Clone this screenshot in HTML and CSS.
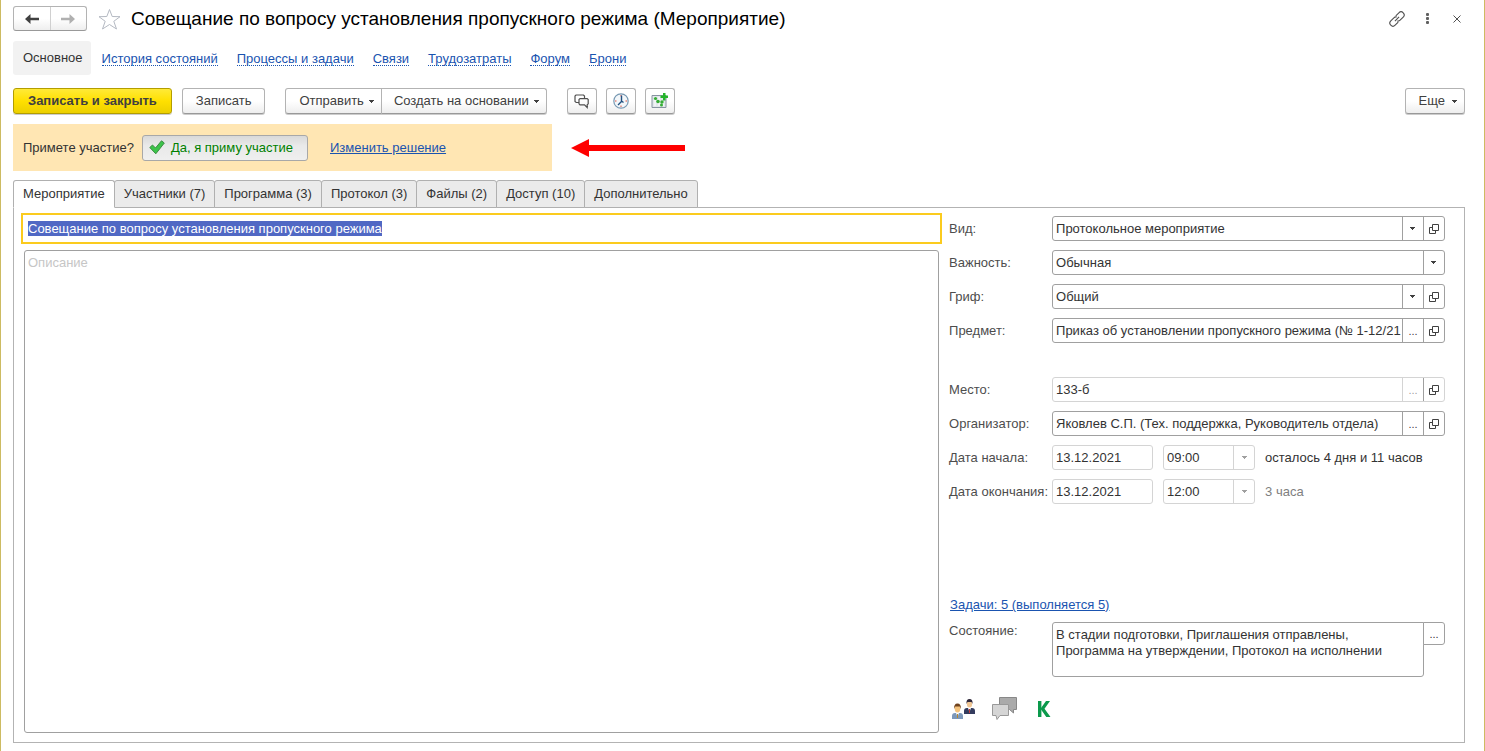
FILE: index.html
```html
<!DOCTYPE html>
<html lang="ru">
<head>
<meta charset="utf-8">
<meta name="viewport" content="width=device-width, initial-scale=1">
<title>Совещание по вопросу установления пропускного режима (Мероприятие)</title>
<link rel="stylesheet" href="styles.css">
<script src="app.js" defer></script>
</head>
<body>
<svg class="sprite" aria-hidden="true">
  <symbol id="i-open" viewBox="0 0 10 10"><path d="M3.5.5h6v6h-6zM3 3.500H.5v6h6V7" fill="none" stroke="#404040"/></symbol>
  <symbol id="i-caret" viewBox="0 0 5 3"><path d="M0 0h5v1H4v1H3v1H2V2H1V1H0z" fill="currentColor"/></symbol>
</svg>
<header class="titlebar">
  <div class="history">
    <button type="button" class="history-btn" aria-label="Назад"><svg width="14" height="10" viewBox="0 0 14 10"><path d="M0 5 5.500 0v3.800H14v2.400H5.500V10z" fill="#404040"/></svg></button>
    <button type="button" class="history-btn" aria-label="Вперед"><svg width="14" height="10" viewBox="0 0 14 10"><path d="M14 5 8.500 0v3.800H0v2.400h8.500V10z" fill="#b0b0b0"/></svg></button>
  </div>
  <button type="button" class="plain star" aria-label="В избранное"><svg width="23" height="22" viewBox="0 0 23 22"><path d="M11.500 1.500 14.200 8.500 22 8.700 15.800 13.300 18.500 21 11.500 16.500 4.500 21 7.200 13.300 1 8.700 8.800 8.500z" fill="none" stroke="#b4b9c2"/></svg></button>
  <h1 class="title">Совещание по вопросу установления пропускного режима (Мероприятие)</h1>
  <div class="window-tools">
    <button type="button" class="plain" aria-label="Получить ссылку"><svg width="16" height="16" viewBox="0 0 17 17" fill="none" stroke="#505050" stroke-width="1.200"><path d="M7.200 5.200 10.500 1.900a3.200 3.200 0 0 1 4.600 4.600l-3.300 3.300a3.200 3.200 0 0 1-3 .8M9.800 11.800l-3.300 3.300a3.200 3.200 0 0 1-4.600-4.600l3.300-3.300a3.200 3.200 0 0 1 3-.8M6.300 10.700l4.400-4.400"/></svg></button>
    <button type="button" class="plain" aria-label="Дополнительно"><svg width="3" height="11" viewBox="0 0 3 11" fill="#606060"><rect width="3" height="3" rx="1"/><rect y="4" width="3" height="3" rx="1"/><rect y="8" width="3" height="3" rx="1"/></svg></button>
    <button type="button" class="plain" aria-label="Закрыть"><svg width="8" height="8" viewBox="0 0 8 8"><path d="M.5.5l7 7M7.500.5l-7 7" stroke="#505050"/></svg></button>
  </div>
</header>
<nav class="sections">
  <a class="section current" href="#main">Основное</a>
  <a class="section" href="#history"><span>История состояний</span></a>
  <a class="section" href="#tasks"><span>Процессы и задачи</span></a>
  <a class="section" href="#links"><span>Связи</span></a>
  <a class="section" href="#time"><span>Трудозатраты</span></a>
  <a class="section" href="#forum"><span>Форум</span></a>
  <a class="section" href="#booking"><span>Брони</span></a>
</nav>
<div class="toolbar">
  <button type="button" class="btn primary">Записать и закрыть</button>
  <button type="button" class="btn">Записать</button>
  <div class="btn-group">
    <button type="button" class="btn menu">Отправить<svg class="caret"><use href="#i-caret"/></svg></button>
    <button type="button" class="btn menu">Создать на основании<svg class="caret"><use href="#i-caret"/></svg></button>
  </div>
  <div class="icon-buttons">
    <button type="button" class="btn icon" aria-label="Обсуждение"><svg width="15" height="15" viewBox="0 0 15 15" fill="none" stroke="#505050" stroke-width="1.200"><path d="M5 8.500H2.200L1 7.500V2l1-1h7.500l1 1v2"/><path d="M6 4.600h7.200l1 1v4.200l-1 1V13.500l-2.700-2.700H6l-1-1V5.600z"/></svg></button>
    <button type="button" class="btn icon" aria-label="Учет времени"><svg width="16" height="16" viewBox="0 0 16 16" fill="none"><circle cx="8" cy="8" r="7.200" fill="#f3f7fa" stroke="#7899b3" stroke-width="1.200"/><path d="M8 2v1.500M8 12.500V14M2 8h1.500M12.500 8H14" stroke="#e05040"/><path d="M8.500 2.500v6L5 12M8.500 8l2 1.500" stroke="#205080" stroke-width="1.400"/></svg></button>
    <button type="button" class="btn icon" aria-label="Добавить на карту"><svg width="17" height="16" viewBox="0 0 17 16"><path d="M1 2.500h14v12H1z" fill="#e3e8ec" stroke="#8794a0"/><path d="M4 4v9M8 4v9M12 8v5" stroke="#fff"/><circle cx="4.500" cy="5.500" r="1.600" fill="#35ae35"/><circle cx="7" cy="8.500" r="1.800" fill="#35ae35"/><circle cx="11" cy="9" r="1.700" fill="#35ae35"/><circle cx="10.500" cy="12" r="1.500" fill="#35ae35"/><path d="M12 0h2.500v2.500H17V5h-2.500v2.500H12V5H9.500V2.500H12z" fill="#25b52b"/></svg></button>
  </div>
  <button type="button" class="btn menu more">Еще<svg class="caret"><use href="#i-caret"/></svg></button>
</div>
<div class="invite-row">
  <section class="invite">
    <span>Примете участие?</span>
    <button type="button" class="btn accepted" aria-pressed="true"><svg width="16" height="15" viewBox="0 0 16 15"><path d="M.8 7.500 3.500 5 6.500 8 12.500.8 15.300 3 6.800 13.800z" fill="#3cc44a" stroke="#3d8b43"/></svg>Да, я приму участие</button>
    <a href="#decision">Изменить решение</a>
  </section>
  <svg class="pointer" width="115" height="18" viewBox="0 0 115 18" aria-hidden="true"><path d="M0 9 18 0v6h96v6H18v6z" fill="#f00"/></svg>
</div>
<div class="tabs" role="tablist">
  <button type="button" class="tab active" role="tab" aria-selected="true">Мероприятие</button>
  <button type="button" class="tab" role="tab">Участники (7)</button>
  <button type="button" class="tab" role="tab">Программа (3)</button>
  <button type="button" class="tab" role="tab">Протокол (3)</button>
  <button type="button" class="tab" role="tab">Файлы (2)</button>
  <button type="button" class="tab" role="tab">Доступ (10)</button>
  <button type="button" class="tab" role="tab">Дополнительно</button>
</div>
<main class="panel">
  <div class="about">
    <input class="subject" id="subject" type="text" aria-label="Наименование" value="Совещание по вопросу установления пропускного режима">
    <textarea class="description" aria-label="Описание" placeholder="Описание"></textarea>
  </div>
  <form class="details">
    <div class="fields">
      <label for="kind">Вид:</label>
      <div class="field pick">
        <select id="kind"><option>Протокольное мероприятие</option></select>
        <span class="cell arrow"><svg class="caret"><use href="#i-caret"/></svg></span>
        <button type="button" class="cell" aria-label="Открыть вид"><svg class="open"><use href="#i-open"/></svg></button>
      </div>
      <label for="importance">Важность:</label>
      <div class="field pick">
        <select id="importance"><option>Обычная</option></select>
        <span class="cell arrow"><svg class="caret"><use href="#i-caret"/></svg></span>
      </div>
      <label for="secrecy">Гриф:</label>
      <div class="field pick">
        <select id="secrecy"><option>Общий</option></select>
        <span class="cell arrow"><svg class="caret"><use href="#i-caret"/></svg></span>
        <button type="button" class="cell" aria-label="Открыть гриф"><svg class="open"><use href="#i-open"/></svg></button>
      </div>
      <label for="topic">Предмет:</label>
      <div class="field">
        <input id="topic" type="text" value="Приказ об установлении пропускного режима (№ 1-12/21 от 09.12.2021)">
        <button type="button" class="cell" aria-label="Выбрать предмет">...</button>
        <button type="button" class="cell" aria-label="Открыть предмет"><svg class="open"><use href="#i-open"/></svg></button>
      </div>
    </div>
    <div class="fields schedule">
      <label for="place">Место:</label>
      <div class="field muted">
        <input id="place" type="text" readonly value="133-б">
        <button type="button" class="cell" aria-label="Выбрать место">...</button>
        <button type="button" class="cell live" aria-label="Открыть место"><svg class="open"><use href="#i-open"/></svg></button>
      </div>
      <label for="organizer">Организатор:</label>
      <div class="field">
        <input id="organizer" type="text" value="Яковлев С.П. (Тех. поддержка, Руководитель отдела)">
        <button type="button" class="cell" aria-label="Выбрать организатора">...</button>
        <button type="button" class="cell" aria-label="Открыть организатора"><svg class="open"><use href="#i-open"/></svg></button>
      </div>
      <label for="start">Дата начала:</label>
      <div class="moment">
        <div class="field muted date"><input id="start" type="text" readonly value="13.12.2021"></div>
        <div class="field muted pick time">
          <select aria-label="Время начала"><option>09:00</option></select>
          <span class="cell arrow"><svg class="caret"><use href="#i-caret"/></svg></span>
        </div>
        <span>осталось 4 дня и 11 часов</span>
      </div>
      <label for="end">Дата окончания:</label>
      <div class="moment">
        <div class="field muted date"><input id="end" type="text" readonly value="13.12.2021"></div>
        <div class="field muted pick time">
          <select aria-label="Время окончания"><option>12:00</option></select>
          <span class="cell arrow"><svg class="caret"><use href="#i-caret"/></svg></span>
        </div>
        <span class="duration">3 часа</span>
      </div>
    </div>
    <a class="task-link" href="#tasks">Задачи: 5 (выполняется 5)</a>
    <div class="fields status-row">
      <label for="status">Состояние:</label>
      <div class="status">
        <textarea id="status" readonly>В стадии подготовки, Приглашения отправлены, Программа на утверждении, Протокол на исполнении</textarea>
        <button type="button" class="status-more" aria-label="Выбрать состояние">...</button>
      </div>
    </div>
    <div class="badges">
      <svg width="24" height="20" viewBox="0 0 24 20" role="img" aria-label="Участники">
        <path d="M12 15v-3q0-3 3-3h5q3 0 3 3v3z" fill="#343c5e"/><path d="M16 9h3l-1.500 4z" fill="#fff"/><path d="M17 10h1v4h-1z" fill="#c03a3a"/><ellipse cx="17.500" cy="5" rx="2.600" ry="3.500" fill="#f1c795"/><path d="M14.500 5q-.5-5 3-5t3 5l-1-2h-4z" fill="#30283a"/>
        <path d="M0 20v-3q0-3 3-3h5q3 0 3 3v3z" fill="#7d98ba"/><path d="M4 14h3l-1.500 4z" fill="#fff"/><path d="M5 15h1v4H5z" fill="#b58830"/><ellipse cx="5.500" cy="9.500" rx="2.800" ry="4" fill="#f4c27c"/><path d="M2.200 10q-.5-5.500 3.300-5.500T8.800 10l-1-2.500H3.200z" fill="#70421d"/>
      </svg>
      <svg width="25" height="24" viewBox="0 0 25 24" role="img" aria-label="Обсуждения"><path d="M7.500.5h17v12h-3V16l-4-3.500h-10z" fill="#aaa" stroke="#888"/><path d="M.5 7.500h16v11H8L5 22.500l-1-4H.5z" fill="#d5d5d5" stroke="#999"/></svg>
      <svg width="18" height="16" viewBox="-4 0 18 16" role="img" aria-label="Контроль"><path d="M2.700 0v16" stroke="#0b9a4c" stroke-width="3.400"/><path d="M9 0h4L7.500 7.700 13.500 16H9.300L4 8.500V7z" fill="#0b9a4c"/></svg>
    </div>
  </form>
</main>
</body>
</html>
```
FILE: styles.css
```css
* { box-sizing: border-box; }

body {
  margin: 0;
  min-height: 100vh;
  display: flex;
  flex-direction: column;
  padding: 6px 19px 8px 12px;
  border: solid #cdbb62;
  border-width: 0 1px;
  background: #fff;
  color: #333;
  font: 13px/16px "Liberation Sans", Arial, sans-serif;
}

button, input, select, textarea { font: inherit; color: inherit; margin: 0; }
button { cursor: pointer; }
a { color: #1a54b0; }
svg { display: block; flex: none; }
.sprite { position: absolute; width: 0; height: 0; }
.caret { width: 5px; height: 3px; }
.open { width: 10px; height: 10px; }
.plain { display: flex; justify-content: center; padding: 0; border: 0; background: none; }

.titlebar { display: flex; align-items: center; height: 25px; }
.history {
  display: flex;
  width: 74px;
  height: 25px;
  border: 1px solid #b3b3b3;
  border-bottom-color: #999;
  border-radius: 3px;
  background: linear-gradient(#fff 50%, #eee);
}
.history-btn {
  flex: 1;
  display: flex;
  align-items: center;
  justify-content: center;
  padding: 0;
  border: 0;
  background: none;
}
.history-btn + .history-btn { border-left: 1px solid #d0d0d0; }
.star { margin: 0 10px 0 11px; }
.title {
  flex: 1;
  margin: 0;
  color: #000;
  font-size: 19px;
  font-weight: 400;
  line-height: 24px;
  white-space: nowrap;
}
.window-tools { display: flex; align-items: center; gap: 14px; }
.window-tools .plain { width: 16px; }

.sections { display: flex; margin-top: 10px; }
.section { padding: 11px 9px 9px 10px; text-decoration: none; }
.section span { display: block; line-height: 13px; border-bottom: 1px dotted #1a54b0; }
.section.current {
  margin-right: 1px;
  padding: 9px 8px 9px 10px;
  border-radius: 3px;
  background: #f2f2f2;
  color: #333;
}

.toolbar { display: flex; margin-top: 13px; padding-bottom: 1px; }
.btn {
  display: flex;
  align-items: center;
  justify-content: center;
  height: 26px;
  padding: 0 13px;
  border: 1px solid #b3b3b3;
  border-bottom-color: #999;
  border-radius: 3px;
  background: linear-gradient(#fff 50%, #eee);
  box-shadow: 0 1px 0 #ccc;
  color: #404040;
  white-space: nowrap;
}
.btn.primary {
  margin-right: 10px;
  padding: 0 14px;
  border-color: #b39d00;
  background: linear-gradient(#ffea38, #ffe000 50%, #ecd000);
  font-weight: 700;
}
.btn.menu { gap: 5px; padding-right: 7px; }
.btn-group { display: flex; margin-left: 20px; }
.btn-group .btn:first-child { border-radius: 3px 0 0 3px; }
.btn-group .btn:last-child { margin-left: -1px; padding-left: 12px; border-radius: 0 3px 3px 0; }
.icon-buttons { display: flex; gap: 9px; margin-left: 20px; }
.btn.icon { width: 30px; padding: 0; }
.btn.more { margin-left: auto; gap: 7px; }

.invite-row { display: flex; align-items: center; gap: 19px; margin-top: 9px; }
.invite {
  display: flex;
  align-items: center;
  width: 539px;
  height: 47px;
  padding: 0 10px;
  background: #ffe6b3;
}
.btn.accepted {
  gap: 6px;
  margin: 0 22px 0 8px;
  padding: 0 14px 0 6px;
  border: 1px solid #a8a8a8;
  background: linear-gradient(#d9d9d9, #e9e9e9 40%, #efefef);
  box-shadow: none;
  color: #008000;
}

.tabs { position: relative; display: flex; margin-top: 9px; }
.tab {
  z-index: 0;
  height: 28px;
  margin-right: -1px;
  padding: 0 9px;
  border: 1px solid #b0b0b0;
  border-radius: 3px 3px 0 0;
  background: #ebebeb;
  white-space: nowrap;
}
.tab.active { z-index: 1; border-bottom-color: #fff; background: #fff; }

.panel {
  flex: 1;
  display: grid;
  grid-template-columns: minmax(0, 13fr) minmax(0, 7fr);
  gap: 7px;
  margin-top: -1px;
  padding: 5px 19px 9px 7px;
  border: 1px solid #b3b3b3;
}

.about { display: flex; flex-direction: column; gap: 6px; }
.subject {
  width: 100%;
  height: 31px;
  padding: 0 5px;
  border: 2px solid #fbcb1e;
  outline: 0;
}
.subject::selection { background: #5068c4; color: #fff; }
.description {
  flex: 1;
  display: block;
  margin: 0 3px;
  padding: 4px 3px;
  border: 1px solid #a0a0a0;
  border-radius: 3px;
  resize: none;
}
.description::placeholder { color: #c6c6c6; }

.details { padding-top: 3px; }
.fields {
  display: grid;
  grid-template-columns: 103px minmax(0, 1fr);
  align-items: center;
  row-gap: 9px;
}
.fields label { color: #4d4d4d; white-space: nowrap; }
.schedule { margin-top: 34px; }
.field {
  display: grid;
  grid-template-columns: minmax(0, 1fr);
  grid-auto-columns: 21px;
  grid-auto-flow: column;
  height: 25px;
  border: 1px solid #a0a0a0;
  border-radius: 3px;
}
.field input, .field select {
  grid-row: 1;
  width: 100%;
  min-width: 0;
  padding: 0 3px;
  border: 0;
  background: none;
  outline: 0;
  appearance: none;
}
.field input { padding-right: 1px; }
.pick select { grid-column: 1 / 3; }
.cell {
  grid-row: 1;
  display: flex;
  align-items: center;
  justify-content: center;
  padding: 0;
  border: 0;
  border-left: 1px solid #a0a0a0;
  background: none;
  color: #404040;
  font-size: 11px;
}
.arrow { grid-column: 2; pointer-events: none; }
.muted, .muted .cell { border-color: #d4d4d4; }
.muted .cell { color: #a0a0a0; }
.muted .cell.live { border-left-color: #a0a0a0; }
.moment { display: flex; align-items: center; gap: 10px; white-space: nowrap; }
.date { width: 101px; }
.time { width: 92px; }
.duration { color: #808080; }

.task-link { display: block; width: fit-content; margin: 93px 0 0 1px; }
.status-row { margin-top: 9px; align-items: start; }
.status-row label { padding-top: 1px; }
.status { display: flex; align-items: flex-start; }
.status textarea {
  flex: 1;
  min-width: 0;
  height: 55px;
  padding: 4px 3px;
  border: 1px solid #a0a0a0;
  border-radius: 3px 0 3px 3px;
  resize: none;
}
.status-more {
  width: 22px;
  height: 23px;
  margin-left: -1px;
  padding: 0;
  border: 1px solid #a0a0a0;
  border-radius: 0 3px 3px 0;
  background: #fff;
  font-size: 11px;
}
.badges { display: flex; align-items: center; gap: 16px; margin: 20px 0 0 3px; }
```
FILE: app.js
```js
// The subject is ready for retyping as soon as the form opens.
const subject = document.getElementById('subject');
subject.focus();
subject.select();
```
